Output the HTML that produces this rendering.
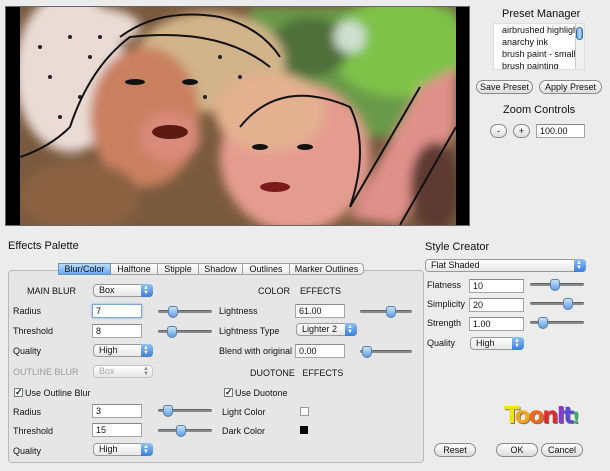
<!DOCTYPE html>
<html><head><meta charset="utf-8">
<style>
*{box-sizing:border-box;margin:0;padding:0}
body{width:610px;height:471px;background:#ececec;font-family:"Liberation Sans",sans-serif;font-size:9px;color:#111;position:relative;overflow:hidden}
.a{position:absolute;white-space:nowrap}
.lbl{position:absolute;font-size:9px;line-height:11px;white-space:nowrap}
.in{position:absolute;background:#fff;border:1px solid #a5a5a5;border-top-color:#888;font-size:9px;line-height:12px;padding-left:3px;height:14px}
.sel{position:absolute;height:13px;border:1px solid #9a9a9a;border-radius:4px;background:linear-gradient(#fff,#e6e6e6);font-size:9px;line-height:11px;padding-left:5px}
.sel::after{content:"";position:absolute;right:-1px;top:-1px;width:12px;height:13px;border-radius:0 4px 4px 0;background:linear-gradient(#8fc1f5,#3a7fd9);}
.sel i{position:absolute;right:3px;top:1px;color:#fff;font-style:normal;font-size:6px;line-height:5px;z-index:2}
.sel.dis{color:#aaa;border-color:#c5c5c5}
.sel.dis::after{background:none}
.sel.dis i{color:#888}
.sl{position:absolute;height:3px;background:#888;border-radius:2px;border-top:1px solid #666}
.th{position:absolute;width:10px;height:12px;top:-5px;border:1px solid #5a7fa6;border-radius:3px 3px 5px 5px;background:linear-gradient(#c8e2fb,#5e9fe3)}
.btn{position:absolute;height:14px;border:1px solid #8a8a8a;border-radius:7px;background:linear-gradient(#fff,#dcdcdc);font-size:9px;line-height:12px;text-align:center}
.cb{position:absolute;width:9px;height:9px;background:#fff;border:1px solid #777;font-size:9px;line-height:7px;color:#123;font-weight:bold}
h2{position:absolute;font-size:11px;font-weight:normal;white-space:nowrap}
.tab{position:absolute;top:263px;height:12px;font-size:9px;line-height:11px;text-align:center;border:1px solid #a0a0a0;border-left:none;background:linear-gradient(#fff,#e8e8e8)}
</style></head><body>

<div class="a" style="left:5px;top:6px;width:465px;height:220px;background:#000;border:1px solid #666"></div>
<svg class="a" style="left:20px;top:7px" width="436" height="218" viewBox="0 0 436 218">
<defs><filter id="b"><feGaussianBlur stdDeviation="5"/></filter></defs>
<rect width="436" height="218" fill="#7a5a3e"/>
<g filter="url(#b)">
<rect x="230" y="0" width="206" height="130" fill="#6a9a4a"/>
<ellipse cx="380" cy="40" rx="70" ry="50" fill="#7ec24a"/>
<ellipse cx="290" cy="40" rx="40" ry="30" fill="#4f6f3a"/>
<ellipse cx="190" cy="55" rx="75" ry="50" fill="#d2b48a"/>
<ellipse cx="50" cy="65" rx="55" ry="80" fill="#eadbd6"/>
<ellipse cx="70" cy="20" rx="50" ry="20" fill="#eadbd6"/>
<ellipse cx="125" cy="110" rx="55" ry="70" fill="#c98060"/>
<ellipse cx="150" cy="130" rx="30" ry="25" fill="#d98a7a"/>
<ellipse cx="275" cy="150" rx="75" ry="75" fill="#e59c90"/>
<ellipse cx="250" cy="105" rx="55" ry="40" fill="#e3b090"/>
<polygon points="330,210 400,80 436,60 436,120 380,218" fill="#e0908a"/>
<ellipse cx="60" cy="190" rx="60" ry="35" fill="#8a6242"/>
<ellipse cx="415" cy="180" rx="25" ry="45" fill="#5d3b30"/>
<ellipse cx="330" cy="30" rx="16" ry="16" fill="#cfe0d0"/>
</g>
<g fill="#111">
<ellipse cx="115" cy="75" rx="10" ry="3"/><ellipse cx="170" cy="75" rx="8" ry="3"/>
<ellipse cx="240" cy="140" rx="8" ry="3"/><ellipse cx="285" cy="140" rx="8" ry="3"/>
<ellipse cx="255" cy="180" rx="15" ry="5" fill="#7a1a1a"/>
<ellipse cx="150" cy="125" rx="18" ry="7" fill="#5a1a12"/>
</g>
<g fill="#222">
<circle cx="50" cy="30" r="2"/><circle cx="70" cy="50" r="2"/><circle cx="30" cy="70" r="2"/><circle cx="60" cy="90" r="2"/><circle cx="40" cy="110" r="2"/><circle cx="80" cy="30" r="2"/><circle cx="20" cy="40" r="2"/><circle cx="200" cy="50" r="2"/><circle cx="220" cy="70" r="2"/><circle cx="185" cy="90" r="2"/>
</g>
<g stroke="#111" stroke-width="2" fill="none">
<path d="M0 150 Q30 140 50 120 Q70 60 110 30 Q200 20 250 60"/>
<path d="M100 30 Q140 0 200 10 Q240 20 260 50"/>
<path d="M220 120 Q260 70 330 100 Q350 140 330 200"/>
<path d="M330 200 L400 80"/><path d="M380 218 L436 120"/>
</g>
</svg>

<h2 style="left:502px;top:8px">Preset Manager</h2>
<div class="a" style="left:493px;top:23px;width:92px;height:47px;background:#fff;border:1px solid #ddd;overflow:hidden;font-size:9px;line-height:12px;padding-left:8px">airbrushed highligh<br>anarchy ink<br>brush paint - small<br>brush painting</div>
<div class="a" style="left:575px;top:24px;width:9px;height:45px;background:#f0f0f0;border-left:1px solid #ccc"></div>
<div class="a" style="left:576px;top:27px;width:7px;height:13px;border-radius:4px;background:linear-gradient(90deg,#5a9fe8,#bfe0ff,#5a9fe8);border:1px solid #3a70b0"></div>
<div class="btn" style="left:476px;top:80px;width:57px">Save Preset</div>
<div class="btn" style="left:539px;top:80px;width:63px">Apply Preset</div>
<h2 style="left:503px;top:104px">Zoom Controls</h2>
<div class="btn" style="left:490px;top:124px;width:17px">-</div>
<div class="btn" style="left:513px;top:124px;width:17px">+</div>
<div class="in" style="left:536px;top:124px;width:49px">100.00</div>

<h2 style="left:8px;top:240px">Effects Palette</h2>
<div class="a" style="left:8px;top:270px;width:416px;height:193px;border:1px solid #b8b8b8;border-radius:4px;background:#e6e6e6"></div>
<div class="tab" style="left:58px;width:53px;border-left:1px solid #6a8fc0;background:linear-gradient(#b9dcfb,#6aaaf0);border-color:#6a8fc0">Blur/Color</div>
<div class="tab" style="left:111px;width:47px">Halftone</div>
<div class="tab" style="left:158px;width:41px">Stipple</div>
<div class="tab" style="left:199px;width:44px">Shadow</div>
<div class="tab" style="left:243px;width:47px">Outlines</div>
<div class="tab" style="left:290px;width:74px;border-radius:0 4px 4px 0">Marker Outlines</div>

<div class="lbl" style="left:27px;top:286px">MAIN BLUR</div>
<div class="sel" style="left:93px;top:284px;width:60px">Box<i>▲<br>▼</i></div>
<div class="lbl" style="left:13px;top:306px">Radius</div>
<div class="in" style="left:92px;top:304px;width:50px;border:1px solid #7aa7d8;box-shadow:0 0 2px #7aa7d8">7</div>
<div class="sl" style="left:158px;top:310px;width:54px"><div class="th" style="left:10px"></div></div>
<div class="lbl" style="left:13px;top:326px">Threshold</div>
<div class="in" style="left:92px;top:324px;width:50px">8</div>
<div class="sl" style="left:158px;top:330px;width:54px"><div class="th" style="left:9px"></div></div>
<div class="lbl" style="left:13px;top:346px">Quality</div>
<div class="sel" style="left:93px;top:344px;width:60px">High<i>▲<br>▼</i></div>
<div class="lbl" style="left:13px;top:367px;color:#999">OUTLINE BLUR</div>
<div class="sel dis" style="left:93px;top:365px;width:60px">Box<i>▲<br>▼</i></div>
<div class="cb" style="left:14px;top:388px">✓</div>
<div class="lbl" style="left:25px;top:388px">Use Outline Blur</div>
<div class="lbl" style="left:13px;top:407px">Radius</div>
<div class="in" style="left:92px;top:404px;width:50px">3</div>
<div class="sl" style="left:158px;top:409px;width:54px"><div class="th" style="left:5px"></div></div>
<div class="lbl" style="left:13px;top:426px">Threshold</div>
<div class="in" style="left:92px;top:423px;width:50px">15</div>
<div class="sl" style="left:158px;top:429px;width:54px"><div class="th" style="left:18px"></div></div>
<div class="lbl" style="left:13px;top:446px">Quality</div>
<div class="sel" style="left:93px;top:443px;width:60px">High<i>▲<br>▼</i></div>

<div class="lbl" style="left:258px;top:286px">COLOR&nbsp;&nbsp;&nbsp; EFFECTS</div>
<div class="lbl" style="left:219px;top:306px">Lightness</div>
<div class="in" style="left:295px;top:304px;width:50px">61.00</div>
<div class="sl" style="left:360px;top:310px;width:52px"><div class="th" style="left:26px"></div></div>
<div class="lbl" style="left:219px;top:326px">Lightness Type</div>
<div class="sel" style="left:296px;top:323px;width:61px">Lighter 2<i>▲<br>▼</i></div>
<div class="lbl" style="left:219px;top:346px">Blend with original</div>
<div class="in" style="left:295px;top:344px;width:50px">0.00</div>
<div class="sl" style="left:360px;top:350px;width:52px"><div class="th" style="left:2px"></div></div>
<div class="lbl" style="left:250px;top:368px">DUOTONE&nbsp;&nbsp; EFFECTS</div>
<div class="cb" style="left:224px;top:388px">✓</div>
<div class="lbl" style="left:235px;top:388px">Use Duotone</div>
<div class="lbl" style="left:222px;top:407px">Light Color</div>
<div class="a" style="left:300px;top:407px;width:9px;height:9px;background:#fff;border:1px solid #999"></div>
<div class="lbl" style="left:222px;top:426px">Dark Color</div>
<div class="a" style="left:300px;top:426px;width:8px;height:8px;background:#000"></div>

<h2 style="left:425px;top:241px">Style Creator</h2>
<div class="sel" style="left:425px;top:259px;width:161px">Flat Shaded<i>▲<br>▼</i></div>
<div class="lbl" style="left:427px;top:280px">Flatness</div>
<div class="in" style="left:469px;top:279px;width:55px">10</div>
<div class="sl" style="left:530px;top:283px;width:54px"><div class="th" style="left:20px"></div></div>
<div class="lbl" style="left:427px;top:299px">Simplicity</div>
<div class="in" style="left:469px;top:298px;width:55px">20</div>
<div class="sl" style="left:530px;top:302px;width:54px"><div class="th" style="left:33px"></div></div>
<div class="lbl" style="left:427px;top:318px">Strength</div>
<div class="in" style="left:469px;top:317px;width:55px">1.00</div>
<div class="sl" style="left:530px;top:321px;width:54px"><div class="th" style="left:8px"></div></div>
<div class="lbl" style="left:427px;top:338px">Quality</div>
<div class="sel" style="left:470px;top:337px;width:54px">High<i>▲<br>▼</i></div>

<div class="a" style="left:504px;top:402px;font-size:23px;font-weight:bold;letter-spacing:-2px;line-height:28px;font-family:'DejaVu Sans',sans-serif;text-shadow:1px 1px 0 #777"><span style="color:#f3e21a">T</span><span style="color:#f6a21a">o</span><span style="color:#f06a1a">o</span><span style="color:#e02a2a">n</span><span style="color:#8a3ad0">I</span><span style="color:#5a4ad8">t</span><span style="color:#2ac06a;font-size:16px">!</span></div>

<div class="btn" style="left:434px;top:443px;width:42px">Reset</div>
<div class="btn" style="left:496px;top:443px;width:42px">OK</div>
<div class="btn" style="left:541px;top:443px;width:42px">Cancel</div>
</body></html>
